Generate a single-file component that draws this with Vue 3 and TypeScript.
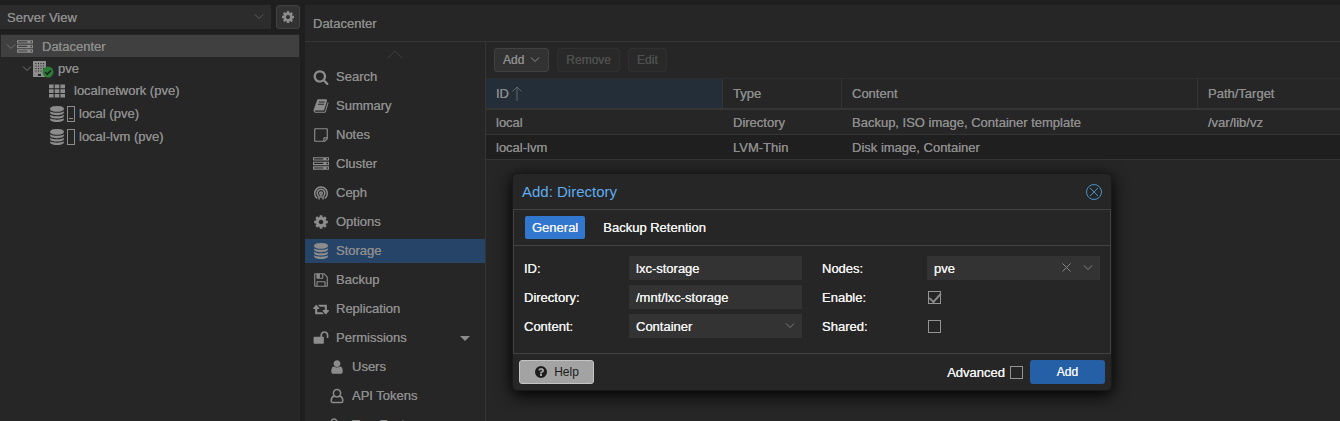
<script setup lang="ts">
import { ref } from 'vue'

interface Icon {
  box: string
  d: string
  line?: boolean
}

const icons: Record<string, Icon> = {
  cog: {
    box: '0 0 1792 1792',
    d: 'M1152 896q0-106-75-181t-181-75-181 75-75 181 75 181 181 75 181-75 75-181zm512-109v222q0 12-8 23t-20 13l-185 28q-19 54-39 91 35 50 107 138 10 12 10 25t-9 23q-27 37-99 108t-94 71q-12 0-26-9l-138-108q-44 23-91 38-16 136-29 186-7 28-36 28h-222q-14 0-24.5-8.5t-11.5-21.5l-28-184q-49-16-90-37l-141 107q-10 9-25 9-14 0-25-11-126-114-165-168-7-10-7-23 0-12 8-23 15-21 51-66.5t54-70.5q-27-50-41-99l-183-27q-13-2-21-12.5t-8-23.5v-222q0-12 8-23t19-13l186-28q14-46 39-92-40-57-107-138-10-12-10-24 0-10 9-23 26-36 98.5-107.5t94.5-71.5q13 0 26 10l138 107q44-23 91-38 16-136 29-186 7-28 36-28h222q14 0 24.5 8.5t11.5 21.5l28 184q49 16 90 37l142-107q9-9 24-9 13 0 25 10 129 119 165 170 7 8 7 22 0 12-8 23-15 21-51 66.5t-54 70.5q26 50 41 98l183 28q13 2 21 12.5t8 23.5z',
  },
  search: {
    box: '0 0 1792 1792',
    d: 'M1216 832q0-185-131.5-316.5t-316.5-131.5-316.5 131.5-131.5 316.5 131.5 316.5 316.5 131.5 316.5-131.5 131.5-316.5zm512 832q0 52-38 90t-90 38q-54 0-90-38l-343-342q-179 124-399 124-143 0-273.5-55.5t-225-150-150-225-55.5-273.5 55.5-273.5 150-225 225-150 273.5-55.5 273.5 55.5 225 150 150 225 55.5 273.5q0 220-124 399l343 343q37 37 37 90z',
  },
  book: {
    box: '0 0 1792 1792',
    d: 'M1703 478q40 57 18 129l-275 906q-19 64-76.5 107.5t-122.5 43.5h-923q-77 0-148.5-53.5t-99.5-131.5q-24-67-2-127 0-4 3-27t4-37q1-8-3-21.5t-3-19.5q2-11 8-21t16.5-23.5 16.5-23.5q23-38 45-91.5t30-91.5q3-10 .5-30t-.5-28q3-11 17-28t17-23q21-36 42-92t25-90q1-9-2.5-32t.5-28q4-13 22-30.5t22-22.5q19-26 42.5-84.5t27.5-96.5q1-8-3-25.5t-2-26.5q2-8 9-18t18-23 17-21q8-12 16.5-30.5t15-35 16-36 19.5-32 26.5-23.5 36-11.5 47.5 5.5l-1 3q38-9 51-9h761q74 0 114 56t18 130l-274 906q-36 119-71.5 153.5t-128.5 34.5h-869q-27 0-38 15-11 16-1 43 24 70 144 70h923q29 0 56-15.5t35-41.5l300-987q7-22 5-57 38 15 59 43zm-1064 2q-4 13 2 22.5t20 9.5h608q13 0 25.5-9.5t16.5-22.5l21-64q4-13-2-22.5t-20-9.5h-608q-13 0-25.5 9.5t-16.5 22.5zm-83 256q-4 13 2 22.5t20 9.5h608q13 0 25.5-9.5t16.5-22.5l21-64q4-13-2-22.5t-20-9.5h-608q-13 0-25.5 9.5t-16.5 22.5z',
  },
  note: {
    box: '-128 0 1792 1792',
    d: 'M1400 1280h-248v248q29-10 41-22l185-185q12-12 22-41zm-280-128h288v-896h-1280v1280h896v-288q0-40 28-68t68-28zm416-928v1024q0 40-20 88t-48 76l-184 184q-28 28-76 48t-88 20h-1024q-40 0-68-28t-28-68v-1344q0-40 28-68t68-28h1344q40 0 68 28t28 68z',
  },
  server: {
    box: '0 0 1792 1792',
    d: 'M128 1408h1024v-128h-1024v128zm0-512h1024v-128h-1024v128zm1568 448q0-40-28-68t-68-28-68 28-28 68 28 68 68 28 68-28 28-68zm-1568-960h1024v-128h-1024v128zm1568 448q0-40-28-68t-68-28-68 28-28 68 28 68 68 28 68-28 28-68zm0-512q0-40-28-68t-68-28-68 28-28 68 28 68 68 28 68-28 28-68zm96 832v384h-1792v-384h1792zm0-512v384h-1792v-384h1792zm0-512v384h-1792v-384h1792z',
  },
  ceph: {
    box: '0 0 16 16',
    line: true,
    d: 'M4.200 13.400A6.300 6.300 0 1 1 11.800 13.400M6 14.400V11.400A3.800 3.800 0 1 1 10 11.400V14.400M8 7a1.300 1.300 0 1 0 .01 0zM8 10.200V13',
  },
  database: {
    box: '0 0 1792 1792',
    d: 'M896 768q237 0 443-43t325-127v170q0 69-103 128t-280 93.5-385 34.5-385-34.5-280-93.5-103-128v-170q119 84 325 127t443 43zm0 768q237 0 443-43t325-127v170q0 69-103 128t-280 93.5-385 34.5-385-34.5-280-93.5-103-128v-170q119 84 325 127t443 43zm0-384q237 0 443-43t325-127v170q0 69-103 128t-280 93.5-385 34.5-385-34.5-280-93.5-103-128v-170q119 84 325 127t443 43zm0-1152q208 0 385 34.5t280 93.5 103 128v128q0 69-103 128t-280 93.5-385 34.5-385-34.5-280-93.5-103-128v-128q0-69 103-128t280-93.5 385-34.5z',
  },
  floppy: {
    box: '0 0 1792 1792',
    d: 'M512 1536h768v-384h-768v384zm896 0h128v-896q0-14-10-38.5t-20-34.5l-281-281q-10-10-34-20t-39-10v416q0 40-28 68t-68 28h-576q-40 0-68-28t-28-68v-416h-128v1280h128v-416q0-40 28-68t68-28h832q40 0 68 28t28 68v416zm-384-928v-320q0-13-9.5-22.5t-22.5-9.5h-192q-13 0-22.5 9.5t-9.5 22.5v320q0 13 9.5 22.5t22.5 9.5h192q13 0 22.5-9.5t9.5-22.5zm640 32v928q0 40-28 68t-68 28h-1344q-40 0-68-28t-28-68v-1344q0-40 28-68t68-28h928q40 0 88 20t76 48l280 280q28 28 48 76t20 88z',
  },
  retweet: {
    box: '0 0 1920 1792',
    d: 'M1280 1504q0 13-9.5 22.5t-22.5 9.5h-960q-8 0-13.5-2t-9-7-5.5-8-3-11.5-1-11.5v-600h-192q-26 0-45-19t-19-45q0-24 15-41l320-384q19-22 49-22t49 22l320 384q15 17 15 41 0 26-19 45t-45 19h-192v384h576q16 0 25 11l160 192q7 10 7 21zm640-416q0 24-15 41l-320 384q-20 23-49 23t-49-23l-320-384q-15-17-15-41 0-26 19-45t45-19h192v-384h-576q-16 0-25-12l-160-192q-7-9-7-20 0-13 9.5-22.5t22.5-9.5h960q8 0 13.5 2t9 7 5.5 8 3 11.5 1 11.5v600h192q26 0 45 19t19 45z',
  },
  unlock: {
    box: '0 0 1792 1792',
    d: 'M1728 576v256q0 26-19 45t-45 19h-64q-26 0-45-19t-19-45v-256q0-106-75-181t-181-75-181 75-75 181v192h96q40 0 68 28t28 68v576q0 40-28 68t-68 28h-960q-40 0-68-28t-28-68v-576q0-40 28-68t68-28h672v-192q0-185 131.5-316.5t316.5-131.5 316.5 131.5 131.5 316.5z',
  },
  user: {
    box: '0 0 1792 1792',
    d: 'M1536 1399q0 109-62.5 187t-150.5 78h-854q-88 0-150.5-78t-62.5-187q0-85 8.5-160.5t31.5-152 58.5-131 94-89 134.5-34.5q131 128 313 128t313-128q76 0 134.5 34.5t94 89 58.5 131 31.5 152 8.5 160.5zm-256-887q0 159-112.5 271.5t-271.5 112.5-271.5-112.5-112.5-271.5 112.5-271.5 271.5-112.5 271.5 112.5 112.5 271.5z',
  },
  userOutline: {
    box: '0 0 16 16',
    line: true,
    d: 'M8 1.600a3.700 3.700 0 1 0 .01 0zM5 8C2.900 8.800 2.200 10.800 2.200 12.900Q2.200 14.600 3.900 14.600H12.100Q13.800 14.600 13.800 12.900C13.800 10.800 13.100 8.800 11 8',
  },
  key: {
    box: '0 0 16 16',
    line: true,
    d: 'M5 2a3 3 0 1 0 .01 0zM7.200 7.200L14 14M11 11l2-2',
  },
  grid: {
    box: '0 0 16 16',
    d: 'M0 1.500h4.600v3.700H0zM5.700 1.500h4.600v3.700H5.700zM11.400 1.500H16v3.700h-4.600zM0 6.200h4.600v3.700H0zM5.700 6.200h4.600v3.700H5.700zM11.400 6.200H16v3.700h-4.600zM0 10.900h4.600v3.700H0zM5.700 10.900h4.600v3.700H5.700zM11.400 10.900H16v3.700h-4.600z',
  },
  building: {
    box: '0 0 16 16',
    d: 'M0 0h13v16H0zM2.500 2v.9h1V2zM5 2v.9h1V2zM7.500 2v.9h1V2zM10 2v.9h1V2zM2.500 4.500v.9h1v-.9zM5 4.500v.9h1v-.9zM7.500 4.500v.9h1v-.9zM10 4.500v.9h1v-.9zM2.500 7v.9h1V7zM5 7v.9h1V7zM7.500 7v.9h1V7zM10 7v.9h1V7zM2.500 9.500v.9h1v-.9zM5 9.500v.9h1v-.9zM7.500 9.500v.9h1v-.9zM5 13v2h3v-2z',
  },
  help: {
    box: '0 0 1792 1792',
    d: 'M1024 1376v-192q0-14-9-23t-23-9h-192q-14 0-23 9t-9 23v192q0 14 9 23t23 9h192q14 0 23-9t9-23zm256-672q0-88-55.5-163t-138.5-116-170-41q-243 0-371 213-15 24 8 42l132 100q7 6 19 6 16 0 25-12 53-68 86-92 34-24 86-24 48 0 85.5 26t37.5 59q0 38-20 61t-68 45q-63 28-115.5 86.5t-52.5 125.5v36q0 14 9 23t23 9h192q14 0 23-9t9-23q0-19 21.5-49.5t54.5-49.5q32-18 49-28.5t46-35 44.5-48 28-60.5 12.5-81zM1664 896a768 768 0 1 1-1536 0 768 768 0 1 1 1536 0z',
  },
}

interface NavItem {
  label: string
  icon: string
  sub?: boolean
  expandable?: boolean
}

const navItems: NavItem[] = [
  { label: 'Search', icon: 'search' },
  { label: 'Summary', icon: 'book' },
  { label: 'Notes', icon: 'note' },
  { label: 'Cluster', icon: 'server' },
  { label: 'Ceph', icon: 'ceph' },
  { label: 'Options', icon: 'cog' },
  { label: 'Storage', icon: 'database' },
  { label: 'Backup', icon: 'floppy' },
  { label: 'Replication', icon: 'retweet' },
  { label: 'Permissions', icon: 'unlock', expandable: true },
  { label: 'Users', icon: 'user', sub: true },
  { label: 'API Tokens', icon: 'userOutline', sub: true },
  { label: 'Two Factor', icon: 'key', sub: true },
]
const activeNav = ref('Storage')

interface TreeNode {
  label: string
  icon: string
  level: number
  open?: boolean
  online?: boolean
  gauge?: 'low' | 'empty'
}

const tree: TreeNode[] = [
  { label: 'Datacenter', icon: 'server', level: 0, open: true },
  { label: 'pve', icon: 'building', level: 1, open: true, online: true },
  { label: 'localnetwork (pve)', icon: 'grid', level: 2 },
  { label: 'local (pve)', icon: 'database', level: 2, gauge: 'low' },
  { label: 'local-lvm (pve)', icon: 'database', level: 2, gauge: 'empty' },
]
const activeNode = ref('Datacenter')

const storages = [
  { id: 'local', type: 'Directory', content: 'Backup, ISO image, Container template', path: '/var/lib/vz' },
  { id: 'local-lvm', type: 'LVM-Thin', content: 'Disk image, Container', path: '' },
]

const tabs = ['General', 'Backup Retention']
const activeTab = ref('General')
const view = ref('Server View')
const storageId = ref('lxc-storage')
const directory = ref('/mnt/lxc-storage')
const content = ref('Container')
const node = ref('pve')
const enabled = ref(true)
const shared = ref(false)
const advanced = ref(false)
</script>

<template>
  <div class="app">
    <aside class="sidebar">
      <div class="view-bar">
        <div class="picker view-picker">
          <select v-model="view" aria-label="View">
            <option>Server View</option>
          </select>
          <svg class="chevron" viewBox="0 0 10 6"><path d="M1 .5l4 4 4-4" /></svg>
        </div>
        <button class="btn gear" type="button" aria-label="View settings">
          <svg class="icon small" :viewBox="icons.cog.box"><path fill-rule="evenodd" :d="icons.cog.d" /></svg>
        </button>
      </div>
      <ul class="tree">
        <li v-for="n in tree" :key="n.label">
          <a
            href="#"
            class="tree-row"
            :class="['level-' + n.level, { active: n.label === activeNode, metered: n.gauge }]"
            @click.prevent="activeNode = n.label"
          >
            <svg v-if="n.open" class="chevron" viewBox="0 0 10 6"><path d="M1 .5l4 4 4-4" /></svg>
            <span class="tree-icon">
              <svg class="icon" :viewBox="icons[n.icon].box"><path fill-rule="evenodd" :d="icons[n.icon].d" /></svg>
              <svg v-if="n.online" class="online" viewBox="0 0 12 12">
                <circle cx="6" cy="6" r="5.500" />
                <path d="M3.200 6.200l2 2 3.600-3.800" />
              </svg>
            </span>
            <span v-if="n.gauge" class="gauge" :class="n.gauge"></span>
            <span>{{ n.label }}</span>
          </a>
        </li>
      </ul>
    </aside>

    <main class="main">
      <header class="title">Datacenter</header>
      <div class="columns">
        <nav class="nav">
          <button class="scroll-up" type="button" aria-label="Scroll up">
            <svg viewBox="0 0 16 9"><path d="M.500 8.500l7.500-7.500 7.500 7.500" /></svg>
          </button>
          <a
            v-for="item in navItems"
            :key="item.label"
            href="#"
            class="nav-item"
            :class="{ sub: item.sub, active: item.label === activeNav }"
            @click.prevent="activeNav = item.label"
          >
            <svg class="icon" :class="{ line: icons[item.icon].line }" :viewBox="icons[item.icon].box">
              <path fill-rule="evenodd" :d="icons[item.icon].d" />
            </svg>
            <span class="nav-label">{{ item.label }}</span>
            <span v-if="item.expandable" class="caret"></span>
          </a>
        </nav>

        <section class="storage">
          <div class="toolbar">
            <button class="btn" type="button">
              Add <svg class="chevron" viewBox="0 0 10 6"><path d="M1 .5l4 4 4-4" /></svg>
            </button>
            <button class="btn" type="button" disabled>Remove</button>
            <button class="btn" type="button" disabled>Edit</button>
          </div>
          <table class="grid">
            <colgroup>
              <col class="col-id" />
              <col class="col-type" />
              <col class="col-content" />
              <col />
            </colgroup>
            <thead>
              <tr>
                <th class="sorted" scope="col">
                  <span class="sort-label">
                    ID <svg class="sort" viewBox="0 0 10 15"><path d="M5 15V1M.500 5.500L5 1l4.500 4.500" /></svg>
                  </span>
                </th>
                <th scope="col">Type</th>
                <th scope="col">Content</th>
                <th scope="col">Path/Target</th>
              </tr>
            </thead>
            <tbody>
              <tr v-for="s in storages" :key="s.id">
                <td>{{ s.id }}</td>
                <td>{{ s.type }}</td>
                <td>{{ s.content }}</td>
                <td>{{ s.path }}</td>
              </tr>
            </tbody>
          </table>
        </section>
      </div>
    </main>

    <form class="dialog" role="dialog" aria-labelledby="dialog-title" @submit.prevent>
      <header class="dialog-head">
        <h2 id="dialog-title">Add: Directory</h2>
        <button class="close" type="button" aria-label="Close">
          <svg viewBox="0 0 16 16"><circle cx="8" cy="8" r="7.500" /><path d="M4 4l8 8M12 4l-8 8" /></svg>
        </button>
      </header>
      <div class="dialog-body">
        <div class="tabs" role="tablist">
          <button
            v-for="t in tabs"
            :key="t"
            type="button"
            role="tab"
            class="tab"
            :class="{ active: t === activeTab }"
            :aria-selected="t === activeTab"
            @click="activeTab = t"
          >{{ t }}</button>
        </div>
        <div class="fields">
          <div class="field">
            <label for="f-id">ID:</label>
            <input id="f-id" v-model="storageId" class="box" type="text" />
          </div>
          <div class="field">
            <label for="f-nodes">Nodes:</label>
            <div class="picker">
              <select id="f-nodes" v-model="node" class="box">
                <option>pve</option>
              </select>
              <button class="clear" type="button" aria-label="Clear nodes" @click="node = ''">
                <svg viewBox="0 0 9 9"><path d="M.500 .500l8 8M8.500 .500l-8 8" /></svg>
              </button>
              <svg class="chevron" viewBox="0 0 10 6"><path d="M1 .5l4 4 4-4" /></svg>
            </div>
          </div>
          <div class="field">
            <label for="f-dir">Directory:</label>
            <input id="f-dir" v-model="directory" class="box" type="text" />
          </div>
          <div class="field">
            <label for="f-enable">Enable:</label>
            <input id="f-enable" v-model="enabled" class="check" type="checkbox" />
          </div>
          <div class="field">
            <label for="f-content">Content:</label>
            <div class="picker">
              <select id="f-content" v-model="content" class="box">
                <option>Container</option>
              </select>
              <svg class="chevron" viewBox="0 0 10 6"><path d="M1 .5l4 4 4-4" /></svg>
            </div>
          </div>
          <div class="field">
            <label for="f-shared">Shared:</label>
            <input id="f-shared" v-model="shared" class="check" type="checkbox" />
          </div>
        </div>
      </div>
      <footer class="dialog-foot">
        <button class="action help" type="button">
          <svg class="icon small" :viewBox="icons.help.box"><path fill-rule="evenodd" :d="icons.help.d" /></svg>
          Help
        </button>
        <span class="spacer"></span>
        <label for="f-advanced">Advanced</label>
        <input id="f-advanced" v-model="advanced" class="check" type="checkbox" />
        <button class="action primary" type="submit">Add</button>
      </footer>
    </form>
  </div>
</template>

<style>
body {
  background: #1f1f1f;
}
</style>

<style scoped>
* {
  box-sizing: border-box;
}
.app {
  position: relative;
  display: flex;
  gap: 5px;
  height: 100vh;
  padding-top: 5px;
  overflow: hidden;
  background: #1f1f1f;
  color: #8c8c8c;
  font: 13px/16px "Liberation Sans", Arial, sans-serif;
  text-shadow: 0 0 currentColor;
}
button,
input,
select {
  margin: 0;
  border: 0;
  font: inherit;
  color: inherit;
  text-shadow: inherit;
}
a {
  color: inherit;
  text-decoration: none;
}
svg {
  display: block;
  flex: none;
}
.icon {
  width: 16px;
  height: 16px;
  fill: currentColor;
}
.icon.small {
  width: 14px;
  height: 14px;
}
.icon.line {
  fill: none;
  stroke: currentColor;
  stroke-width: 1.500;
}
.chevron {
  width: 10px;
  height: 6px;
  fill: none;
  stroke: currentColor;
}

/* resource tree */
.sidebar {
  display: flex;
  flex-direction: column;
  flex: none;
  width: 300px;
}
.view-bar {
  display: flex;
  gap: 5px;
  height: 24px;
  margin-bottom: 5px;
}
.picker {
  position: relative;
  flex: 1;
  min-width: 0;
}
.picker select {
  width: 100%;
  height: 24px;
  padding: 2px 7px 0;
  appearance: none;
  background: #2c2c2c;
}
.picker > .chevron {
  position: absolute;
  top: 9px;
  right: 7px;
  color: #808080;
  pointer-events: none;
}
.view-picker > .chevron {
  color: #5c5c5c;
}
.btn {
  display: flex;
  align-items: center;
  gap: 6px;
  height: 24px;
  padding: 0 8px;
  border: 1px solid #414141;
  border-radius: 3px;
  background: #323232;
  font-size: 12px;
}
.btn:disabled {
  border-color: #303030;
  background: #292929;
  color: #4f4f4f;
}
.gear {
  justify-content: center;
  width: 24px;
  padding: 0;
}
.tree {
  flex: 1;
  margin: 0;
  padding: 1px;
  list-style: none;
  background: #262626;
}
.tree-row {
  display: flex;
  align-items: center;
  height: 22px;
  padding-top: 2px;
  padding-left: 5px;
}
.tree-row.active {
  background: #404040;
}
.tree-row.metered {
  height: 23px;
}
.tree-row > .chevron {
  margin-right: 1px;
  color: #757575;
}
.tree-row.level-1 {
  padding-left: 21px;
}
.tree-row.level-2 {
  padding-left: 48px;
}
.tree-icon {
  position: relative;
  margin-right: 9px;
}
.metered .tree-icon {
  margin-right: 2px;
}
.online {
  position: absolute;
  top: 5px;
  left: 9px;
  width: 12px;
  height: 12px;
  fill: #2b7a36;
}
.online path {
  fill: none;
  stroke: #1c1c1c;
  stroke-width: 1.500;
}
.gauge {
  width: 8px;
  height: 16px;
  margin-right: 4px;
  padding: 1px;
  border: 1px solid #8c8c8c;
}
.gauge.low::before {
  content: "";
  display: block;
  height: 1px;
  margin-top: 10px;
  background: #8c8c8c;
}

/* main panel */
.main {
  display: flex;
  flex-direction: column;
  flex: 1;
  min-width: 0;
  background: #262626;
}
.title {
  flex: none;
  padding: 11px 8px 9px;
  border-bottom: 1px solid #353535;
}
.columns {
  display: flex;
  flex: 1;
  min-height: 0;
}
.nav {
  display: flex;
  flex-direction: column;
  gap: 5px;
  flex: none;
  width: 181px;
  border-right: 1px solid #353535;
  overflow: hidden;
}
.scroll-up {
  display: flex;
  justify-content: center;
  flex: none;
  height: 18px;
  padding: 8px 0 0;
  background: none;
}
.scroll-up svg {
  width: 16px;
  height: 9px;
  fill: none;
  stroke: #3c3c3c;
}
.nav-item {
  display: flex;
  align-items: center;
  gap: 7px;
  flex: none;
  height: 24px;
  padding: 0 15px 0 8px;
}
.nav-item.sub {
  padding-left: 24px;
}
.nav-item.active {
  background: #264468;
}
.nav-label {
  flex: 1;
}
.caret {
  border: 5px solid transparent;
  border-top-color: #8c8c8c;
  border-bottom: 0;
}
.storage {
  flex: 1;
  min-width: 0;
}
.toolbar {
  display: flex;
  gap: 8px;
  padding: 6px 8px;
}
.grid {
  width: 100%;
  table-layout: fixed;
  border-collapse: separate;
  border-spacing: 0;
}
.col-id {
  width: 237px;
}
.col-type {
  width: 119px;
}
.col-content {
  width: 356px;
}
.grid th {
  height: 32px;
  padding: 0 10px;
  border-top: 1px solid #2d2d2d;
  border-right: 1px solid #353535;
  border-bottom: 2px solid #353535;
  text-align: left;
  font-weight: normal;
}
.grid th:last-child {
  border-right: 0;
}
.grid th.sorted {
  background: #232e39;
}
.sort-label {
  display: flex;
  align-items: center;
  gap: 3px;
}
.sort {
  width: 10px;
  height: 15px;
  fill: none;
  stroke: #5d666e;
}
.grid td {
  height: 25px;
  padding: 2px 10px 0;
  border-bottom: 1px solid #353535;
}
.grid tbody tr:nth-child(even) {
  background: #1f1f1f;
}

/* dialog */
.dialog {
  position: absolute;
  top: 174px;
  left: 513px;
  width: 598px;
  border-radius: 4px;
  background: #262626;
  box-shadow: 0 0 0 1px #191919, 0 4px 16px 1px #000;
  color: #f0f0f0;
}
.dialog-head {
  display: flex;
  align-items: center;
  justify-content: space-between;
  height: 35px;
  padding: 0 9px;
}
.dialog-head h2 {
  margin: 0;
  font-size: 15px;
  font-weight: normal;
  text-shadow: none;
  color: #60acf0;
}
.close {
  padding: 0;
  background: none;
}
.close svg {
  width: 16px;
  height: 16px;
  fill: none;
  stroke: #4592c8;
}
.dialog-body {
  border: 1px solid #424242;
}
.tabs {
  display: flex;
  gap: 11px;
  padding: 6px 11px;
  border-bottom: 1px solid #424242;
}
.tab {
  height: 23px;
  padding: 0 7px;
  border-radius: 2px;
  background: none;
}
.tab.active {
  background: #3176cf;
}
.fields {
  display: grid;
  grid-template-columns: repeat(2, minmax(0, 1fr));
  gap: 5px 20px;
  padding: 10px 10px 15px;
}
.field {
  display: flex;
  align-items: center;
  height: 24px;
}
.field label {
  flex: none;
  width: 105px;
  padding-top: 2px;
}
.field .box {
  flex: 1;
  min-width: 0;
  height: 24px;
  padding-left: 7px;
  padding-right: 7px;
  background: #333;
}
.clear {
  position: absolute;
  top: 7px;
  right: 29px;
  padding: 0;
  background: none;
}
.clear svg {
  width: 9px;
  height: 9px;
  fill: none;
  stroke: #858585;
}
.check {
  display: grid;
  place-items: center;
  flex: none;
  width: 13px;
  height: 13px;
  appearance: none;
  border: 1px solid #949494;
}
.field .check {
  margin-left: 1px;
}
.check:checked::after {
  content: "";
  width: 10px;
  height: 5px;
  border: solid #8a8a8a;
  border-width: 0 0 2px 2px;
  transform: translateY(-1px) rotate(-48deg);
}
.dialog-foot {
  display: flex;
  align-items: center;
  padding: 6px;
}
.dialog-foot label {
  margin-right: 5px;
  padding-top: 2px;
}
.spacer {
  flex: 1;
}
.action {
  display: flex;
  align-items: center;
  justify-content: center;
  gap: 6px;
  width: 75px;
  height: 24px;
  border-radius: 3px;
  font-size: 12px;
}
.help {
  border: 1px solid #c4c4c4;
  background: #a3a3a3;
  color: #1c1c1c;
  text-shadow: none;
}
.primary {
  margin-left: 7px;
  background: #255fa5;
}
</style>
